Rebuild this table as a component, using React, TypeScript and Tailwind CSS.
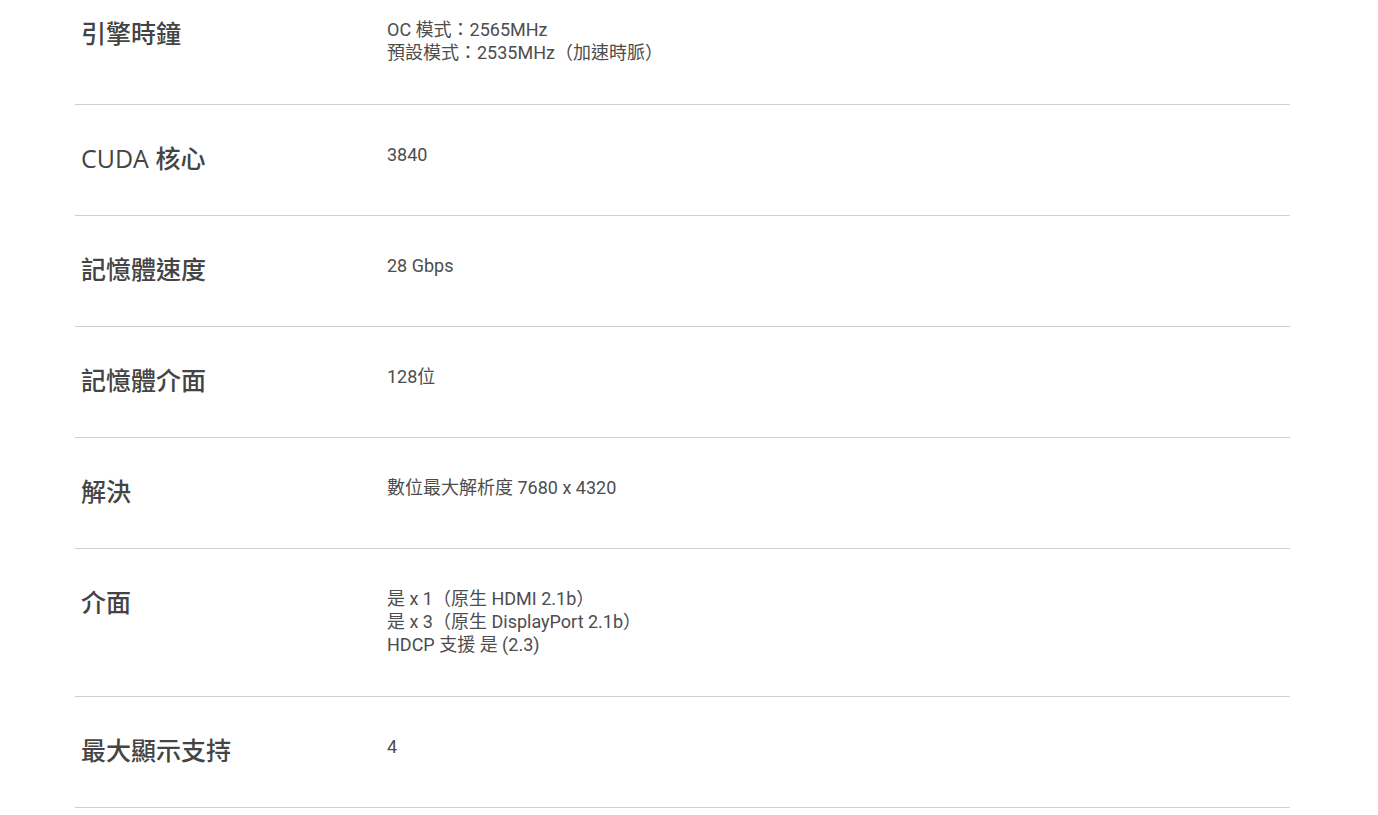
const specs: { label: string; lines: string[] }[] = [
  { label: "引擎時鐘", lines: ["OC 模式：2565MHz", "預設模式：2535MHz（加速時脈）"] },
  { label: "CUDA 核心", lines: ["3840"] },
  { label: "記憶體速度", lines: ["28 Gbps"] },
  { label: "記憶體介面", lines: ["128位"] },
  { label: "解決", lines: ["數位最大解析度 7680 x 4320"] },
  {
    label: "介面",
    lines: ["是 x 1（原生 HDMI 2.1b）", "是 x 3（原生 DisplayPort 2.1b）", "HDCP 支援 是 (2.3)"],
  },
  { label: "最大顯示支持", lines: ["4"] },
];

export default function App() {
  return (
    <div className="min-h-[815px] bg-white overflow-hidden">
      <div className="ml-[75px] w-[1215px] -mt-[20px]">
        {specs.map((s) => (
          <div
            key={s.label}
            className="grid grid-cols-[312px_1fr] pt-[38px] pb-[40px] border-b border-[#cfcfcf]"
          >
            {/* Label */}
            <div className="pl-[6px] pb-[2px] text-[25px] leading-[30px] font-medium text-[#444] font-['Open_Sans','Noto_Sans_CJK_TC',sans-serif]">
              {s.label}
            </div>
            {/* Value */}
            <div className="text-[18px] leading-[23px] text-[#4d4d4d] font-['Roboto','Noto_Sans_CJK_TC',sans-serif]">
              {s.lines.map((l) => (
                <div key={l}>{l}</div>
              ))}
            </div>
          </div>
        ))}
      </div>
    </div>
  );
}
